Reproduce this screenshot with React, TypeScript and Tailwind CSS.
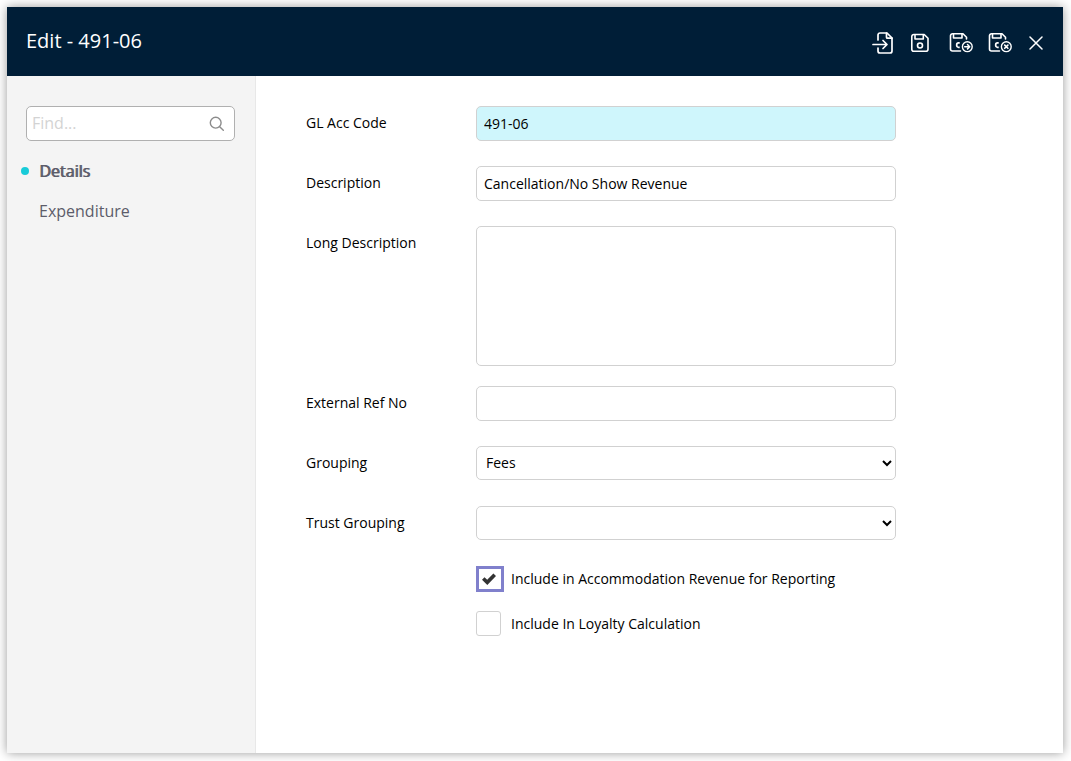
import { useState } from 'react';
import type { ReactNode } from 'react';

const field =
  'w-full rounded-[5px] border border-[#d1d1d1] bg-white text-sm text-black outline-none';

function IconButton({ label, className, children }: { label: string; className?: string; children: ReactNode }) {
  return (
    <button type="button" aria-label={label} title={label} className={`flex h-6 items-center justify-center ${className ?? ''}`}>
      {children}
    </button>
  );
}

function ExitIcon() {
  return (
    <svg width="22" height="22" viewBox="0 0 22 22" fill="none" stroke="currentColor" strokeWidth="1.7" strokeLinecap="round" strokeLinejoin="round">
      <path d="M6 8V3a2 2 0 0 1 2-2h7l5 5v13a2 2 0 0 1-2 2H8a2 2 0 0 1-2-2v-3" />
      <path d="M14.5 1v4.2a1 1 0 0 0 1 1H20" />
      <path d="M1 12.5h13M11 8.5l4 4-4 4" />
    </svg>
  );
}

function SaveIcon() {
  return (
    <svg width="20" height="20" viewBox="0 0 20 20" fill="none" stroke="currentColor" strokeWidth="1.6" strokeLinecap="round" strokeLinejoin="round">
      <path d="M3.8 1.5h10.400L18 5.300v11a2 2 0 0 1-2 2H3.800a2 2 0 0 1-2-2V3.500a2 2 0 0 1 2-2Z" />
      <path d="M5 1.700v4.300h8.300V1.700" />
      <circle cx="10" cy="12.500" r="2.500" />
    </svg>
  );
}

function SaveActionIcon({ action }: { action: 'next' | 'close' }) {
  return (
    <svg width="26" height="22" viewBox="0 0 26 22" fill="none" stroke="currentColor" strokeWidth="1.6" strokeLinecap="round" strokeLinejoin="round">
      <path d="M12.500 19H4.500a2 2 0 0 1-2-2V3.800a2 2 0 0 1 2-2h10.500L18.500 5.300v1.700" />
      <path d="M5.500 2V6h8.500V2" />
      <path d="M11.700 10.900h-1.200a1.800 1.800 0 0 0-1.800 1.800v0.800a1.800 1.800 0 0 0 1.800 1.800h1.200" strokeWidth="1.700" strokeLinecap="butt" />
      <circle cx="19.300" cy="14.700" r="4.900" strokeWidth="1.400" />
      {action === 'next' ? (
        <path d="M16.700 14.700h4.800M19.500 12.500l2.200 2.200-2.200 2.200" strokeWidth="1.500" />
      ) : (
        <path d="m17.700 13.100 3.200 3.200M20.900 13.100l-3.200 3.200" strokeWidth="1.600" />
      )}
    </svg>
  );
}

function Row({ id, label, children }: { id: string; label: string; children: ReactNode }) {
  return (
    <div className="flex items-start">
      <label htmlFor={id} className="w-[170px] shrink-0 pt-[7px] text-sm leading-5">
        {label}
      </label>
      <div className="flex min-w-0 flex-1">{children}</div>
    </div>
  );
}

function SelectField({ id, initial, options }: { id: string; initial: string; options: string[] }) {
  return (
    <select id={id} defaultValue={initial} className={`${field} mb-[26px] h-[34px] pr-[6px] pb-[2px] pl-[5px]`}>
      {options.map((o) => (
        <option key={o} value={o}>
          {o}
        </option>
      ))}
    </select>
  );
}

function Check({ id, label, initial }: { id: string; label: string; initial: boolean }) {
  const [checked, setChecked] = useState(initial);
  return (
    <div className="flex h-[26px] items-center">
      <span className="grid w-[35px] shrink-0 items-center self-start">
        <input
          id={id}
          type="checkbox"
          checked={checked}
          onChange={(e) => setChecked(e.target.checked)}
          className="col-start-1 row-start-1 size-[25px] appearance-none rounded-[3px] border border-[#d1d1d1] bg-white outline-none checked:h-[26px] checked:w-7 checked:rounded-none checked:border-3 checked:border-[#8080cc]"
        />
        {checked && (
          <svg width="14" height="12" viewBox="0 0 14 12" className="pointer-events-none col-start-1 row-start-1 ml-[6px]" aria-hidden="true">
            <path d="M0 6.800 2.500 4.200 5.200 6.800 11.400 0.500 14 3 5.300 12Z" fill="#333" />
          </svg>
        )}
      </span>
      <label htmlFor={id} className="text-sm leading-5">
        {label}
      </label>
    </div>
  );
}

export default function App() {
  return (
    <div className="flex min-h-screen bg-white pt-[7px] pr-2 pb-2 pl-[7px] font-['Open_Sans','Noto_Sans',sans-serif] text-black">
      <div className="flex flex-1 flex-col bg-white shadow-[0_0_10px_rgba(0,0,0,0.4)]">
        <header className="flex h-[69px] shrink-0 items-center justify-between bg-[#001e37] pr-5 pl-[19px] text-white">
          <h1 className="pb-[2px] text-xl">Edit - 491-06</h1>
          <div className="flex items-center pt-[2px]">
            <IconButton label="Exit" className="mr-4">
              <ExitIcon />
            </IconButton>
            <IconButton label="Save" className="mr-[18px]">
              <SaveIcon />
            </IconButton>
            <IconButton label="Save and continue" className="mr-[13px]">
              <SaveActionIcon action="next" />
            </IconButton>
            <IconButton label="Save and close" className="mr-4">
              <SaveActionIcon action="close" />
            </IconButton>
            <IconButton label="Close">
              <svg width="14" height="14" viewBox="0 0 14 14" fill="none" stroke="currentColor" strokeWidth="1.500" strokeLinecap="round">
                <path d="m1 1 12 12M13 1 1 13" />
              </svg>
            </IconButton>
          </div>
        </header>

        <div className="flex flex-1">
          <aside className="w-[249px] shrink-0 border-r border-[#e8e8e8] bg-[#f4f4f4] pt-[30px] pr-5 pl-[19px]">
            <div className="flex h-[35px] items-center rounded-[5px] border border-[#b0b0b0] bg-white pr-[10px] pl-[5px]">
              <input
                type="text"
                aria-label="Find"
                placeholder="Find..."
                className="min-w-0 flex-1 bg-transparent pb-[2px] text-base outline-none placeholder:text-[#d3d3d3]"
              />
              <svg width="15" height="15" viewBox="0 0 15 15" fill="none" stroke="#8c8c8c" strokeWidth="1.400" strokeLinecap="round" aria-hidden="true">
                <circle cx="6.700" cy="6.700" r="5.400" />
                <path d="m10.700 10.700 3.600 3.600" />
              </svg>
            </div>
            <nav className="-ml-[5px] flex flex-col pt-[10px] text-base text-[#5c5c6a]">
              <a href="#details" aria-current="page" className="flex h-10 items-center gap-[10px] [text-shadow:1px_0_0_currentColor]">
                <span className="size-2 rounded-full bg-[#18cbd8]" />
                Details
              </a>
              <a href="#expenditure" className="flex h-10 items-center pl-[18px]">
                Expenditure
              </a>
            </nav>
          </aside>

          <main className="min-w-0 flex-1 px-[50px] pt-[30px] pb-8">
            <form className="max-w-[590px]" onSubmit={(e) => e.preventDefault()}>
              <Row id="code" label="GL Acc Code">
                <input id="code" type="text" defaultValue="491-06" className="mb-[25px] h-[35px] w-full rounded-[5px] border border-[#d1d1d1] bg-[#cff6fc] px-[7px] text-sm outline-none" />
              </Row>
              <Row id="description" label="Description">
                <input id="description" type="text" defaultValue="Cancellation/No Show Revenue" className={`${field} mb-[25px] h-[35px] px-[7px]`} />
              </Row>
              <Row id="long" label="Long Description">
                <textarea id="long" className={`${field} mb-5 h-[140px] resize-none px-[7px] py-[6px]`} />
              </Row>
              <Row id="ref" label="External Ref No">
                <input id="ref" type="text" className={`${field} mb-[25px] h-[35px] px-[7px]`} />
              </Row>
              <Row id="grouping" label="Grouping">
                <SelectField id="grouping" initial="Fees" options={['', 'Fees']} />
              </Row>
              <Row id="trust" label="Trust Grouping">
                <SelectField id="trust" initial="" options={['']} />
              </Row>
              <div className="flex flex-col gap-[19px] pl-[170px]">
                <Check id="reporting" label="Include in Accommodation Revenue for Reporting" initial />
                <Check id="loyalty" label="Include In Loyalty Calculation" initial={false} />
              </div>
            </form>
          </main>
        </div>
      </div>
    </div>
  );
}
